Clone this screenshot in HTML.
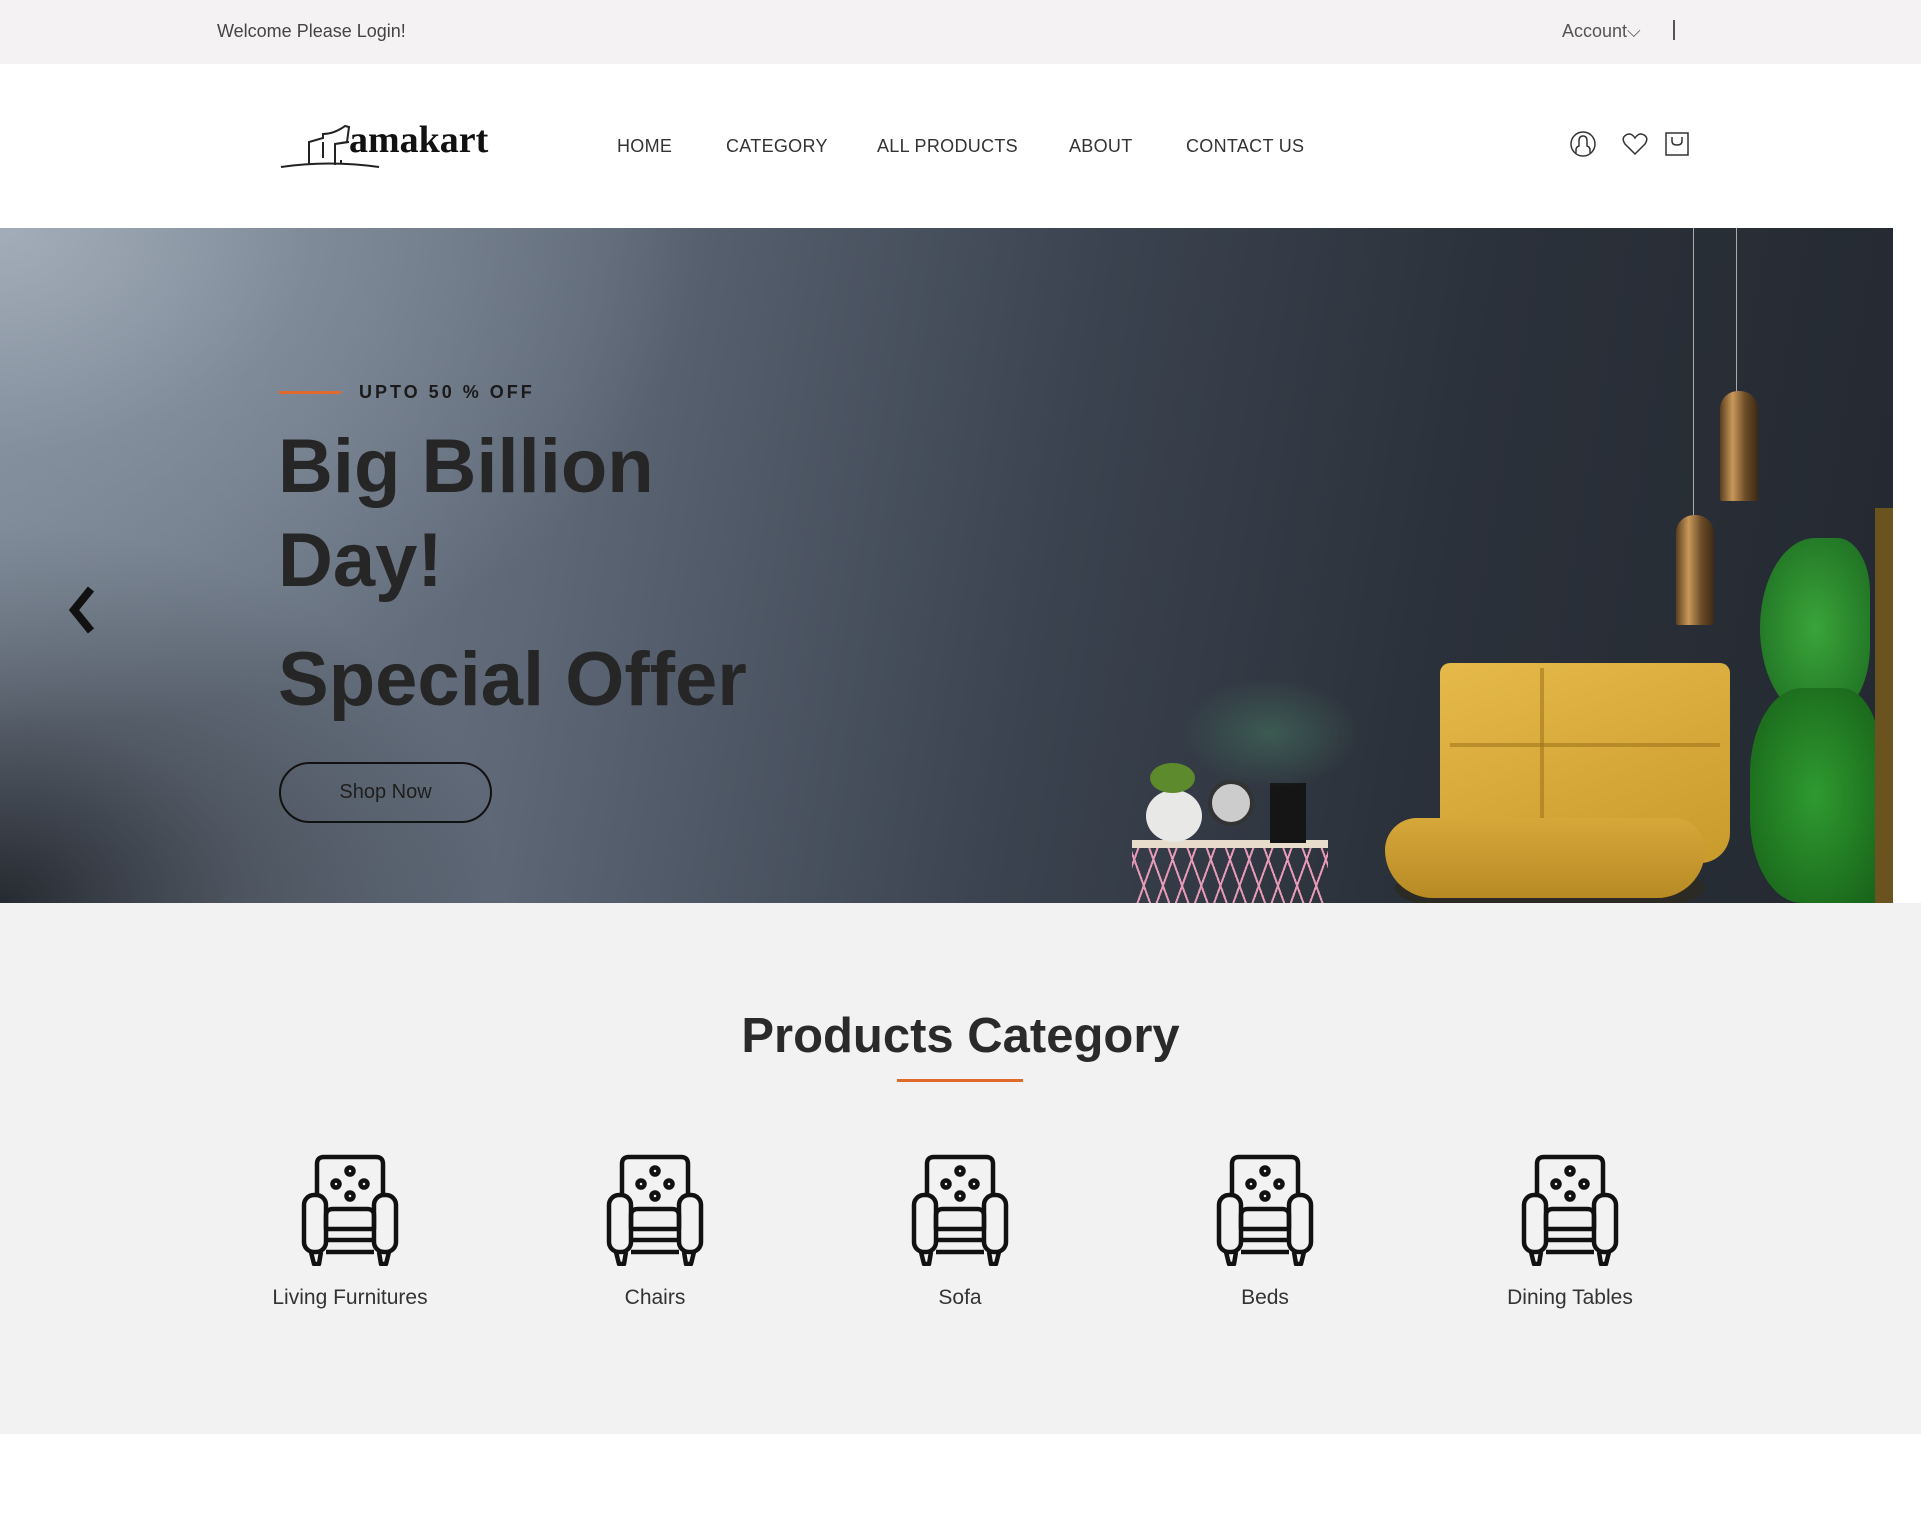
<!DOCTYPE html>
<html><head><meta charset="utf-8"><style>
*{margin:0;padding:0;box-sizing:border-box}
body{width:1921px;height:1537px;background:#fff;font-family:"Liberation Sans",sans-serif;position:relative;overflow:hidden;color:#222}
.abs{position:absolute}
.top{left:0;top:0;width:1921px;height:64px;background:#f4f2f2}
.nav a{position:absolute;top:136px;font-size:18px;color:#333;letter-spacing:.3px}
.hero{left:0;top:228px;width:1893px;height:675px;overflow:hidden;
background:
radial-gradient(ellipse 700px 500px at 0px 0px,#a3adb9 0%,rgba(140,152,166,.6) 45%,rgba(0,0,0,0) 100%),
radial-gradient(ellipse 500px 380px at 0px 675px,#262a31 0%,rgba(38,42,49,.4) 50%,rgba(0,0,0,0) 100%),
linear-gradient(100deg,#7a8593 0%,#5d6775 30%,#3b4350 55%,#2b313a 75%,#242931 100%);}
.gray{left:0;top:903px;width:1921px;height:531px;background:#f2f2f2}
.cat{position:absolute;top:1154px;width:200px;text-align:center;font-size:21px;color:#333}
.cat svg{display:block;margin:0 auto 20px}
</style></head><body>
<div class="abs top"></div>
<div class="abs" style="left:217px;top:21px;font-size:18px;color:#444">Welcome Please Login!</div>
<div class="abs" style="left:1562px;top:21px;font-size:18px;color:#555">Account⌵</div>
<div class="abs" style="left:1673px;top:20px;width:2px;height:20px;background:#555"></div>

<svg class="abs" style="left:279px;top:118px" width="210" height="54" viewBox="0 0 210 54">
<path d="M2 49 Q50 42 100 49" stroke="#222" stroke-width="2" fill="none"/>
<path d="M30 47 V24 L44 20 L44 16 Q55 16 66 8 L70 9 L68 24 L56 26 L56 47 M44 24 L44 40 M56 26 L70 24 M62 42 L62 46" stroke="#222" stroke-width="2" fill="none"/>
<text x="70" y="34" font-family="Liberation Serif,serif" font-weight="bold" font-size="38" fill="#111">amakart</text>
</svg>

<div class="nav">
<a style="left:617px">HOME</a><a style="left:726px">CATEGORY</a><a style="left:877px">ALL PRODUCTS</a><a style="left:1069px">ABOUT</a><a style="left:1186px">CONTACT US</a>
</div>
<svg class="abs" style="left:1570px;top:131px" width="26" height="26" viewBox="0 0 26 26" fill="none" stroke="#333" stroke-width="1.5"><circle cx="13" cy="13" r="12"/><path d="M6 22 V19 Q6 16 9 15 V10 Q9 5 13 5 Q17 5 17 10 V15 Q20 16 20 19 V22"/></svg>
<svg class="abs" style="left:1622px;top:132px" width="26" height="24" viewBox="0 0 26 24" fill="none" stroke="#333" stroke-width="1.5"><path d="M13 22 L3 12 Q-1 6 4 3 Q9 0 13 6 Q17 0 22 3 Q27 6 23 12 Z"/></svg>
<svg class="abs" style="left:1665px;top:132px" width="24" height="24" viewBox="0 0 24 24" fill="none" stroke="#333" stroke-width="1.5"><rect x="1" y="1" width="22" height="22"/><path d="M7 5 V9 Q7 13 12 13 Q17 13 17 9 V5"/></svg>

<div class="abs hero">
 <div class="abs" style="left:1693px;top:0;width:1px;height:290px;background:#aaa"></div>
 <div class="abs" style="left:1736px;top:0;width:1px;height:165px;background:#aaa"></div>
 <div class="abs" style="left:1720px;top:163px;width:38px;height:110px;border-radius:18px 18px 2px 2px;background:linear-gradient(90deg,#5a3f1f,#c9985a,#6b4c28,#3d2a14)"></div>
 <div class="abs" style="left:1676px;top:287px;width:38px;height:110px;border-radius:18px 18px 2px 2px;background:linear-gradient(90deg,#5a3f1f,#c9985a,#6b4c28,#3d2a14)"></div>
 <div class="abs" style="left:1395px;top:630px;width:310px;height:60px;border-radius:50%;background:#2b2a24"></div>
 <div class="abs" style="left:1440px;top:435px;width:290px;height:200px;border-radius:10px 10px 30px 30px;background:linear-gradient(160deg,#e5b94a,#c99a2c)"></div>
 <div class="abs" style="left:1540px;top:440px;width:4px;height:180px;background:rgba(150,110,20,.5)"></div>
 <div class="abs" style="left:1450px;top:515px;width:270px;height:4px;background:rgba(150,110,20,.5)"></div>
 <div class="abs" style="left:1385px;top:590px;width:320px;height:80px;border-radius:40px 40px 60px 60px;background:linear-gradient(180deg,#d6a83a,#b88a24)"></div>
 <div class="abs" style="left:1132px;top:612px;width:196px;height:63px;border-top:8px solid #e8dccc;background:repeating-linear-gradient(70deg,transparent 0 16px,#e79ab7 16px 18px),repeating-linear-gradient(-70deg,transparent 0 16px,#e79ab7 16px 18px)"></div>
 <div class="abs" style="left:1146px;top:562px;width:56px;height:52px;border-radius:50%;background:#e8e8e6"></div>
 <div class="abs" style="left:1150px;top:535px;width:45px;height:30px;border-radius:50%;background:#5d8a2c"></div>
 <div class="abs" style="left:1208px;top:552px;width:46px;height:46px;border-radius:50%;background:#ccc;border:4px solid #333"></div>
 <div class="abs" style="left:1270px;top:555px;width:36px;height:60px;background:#151515"></div>
 <div class="abs" style="left:1180px;top:450px;width:180px;height:110px;border-radius:50%;background:radial-gradient(#3c5a52,rgba(60,90,82,0) 70%)"></div>
 <div class="abs" style="left:1760px;top:310px;width:110px;height:180px;border-radius:50% 30% 40% 50%;background:radial-gradient(#3aa43a,#1c6a20)"></div>
 <div class="abs" style="left:1750px;top:460px;width:130px;height:215px;border-radius:40% 30% 0 40%;background:radial-gradient(#2f9a30,#176018)"></div>
 <div class="abs" style="left:1875px;top:280px;width:18px;height:395px;background:#6b5320"></div>
 <div class="abs" style="left:279px;top:163px;width:62px;height:3px;background:#e06a2c"></div>
 <div class="abs" style="left:359px;top:154px;font-size:18px;font-weight:bold;letter-spacing:3px;color:#1a1a1a">UPTO 50 % OFF</div>
 <div class="abs" style="left:278px;top:192px;font-size:76px;font-weight:bold;line-height:94px;color:#262626;letter-spacing:0px">Big Billion<br>Day!</div>
 <div class="abs" style="left:278px;top:408px;font-size:76px;font-weight:bold;color:#262626;letter-spacing:0px">Special Offer</div>
 <div class="abs" style="left:279px;top:534px;width:213px;height:61px;border:2px solid #111;border-radius:31px;text-align:center;line-height:57px;font-size:20px;color:#1e1e1e">Shop Now</div>
 <svg class="abs" style="left:64px;top:356px" width="34" height="52" viewBox="0 0 34 52"><path d="M27 5 L10 26 L27 47" stroke="#111" stroke-width="8" fill="none"/></svg>
</div>

<div class="abs gray"></div>
<div class="abs" style="left:0;width:1921px;top:1008px;text-align:center;font-size:49px;font-weight:bold;color:#2a2a2a">Products Category</div>
<div class="abs" style="left:897px;top:1079px;width:126px;height:3px;background:#e06a2c"></div>

<svg width="0" height="0" style="position:absolute"><defs><g id="ch" fill="none" stroke="#111" stroke-width="4.5" stroke-linejoin="round">
<path d="M16 40 V10 Q16 3 23 3 H75 Q82 3 82 10 V40"/>
<rect x="3" y="41" width="22" height="57" rx="10"/><rect x="73" y="41" width="22" height="57" rx="10"/>
<path d="M25 75 V62 Q25 55 32 55 H66 Q73 55 73 62 V75 M25 75 H73 M25 86 H73 M25 98 H73"/>
<path d="M10 98 L13 110 H18 L20 98 M78 98 L80 110 H85 L88 98"/>
<circle cx="49" cy="17" r="3.5"/><circle cx="35" cy="30" r="3.5"/><circle cx="63" cy="30" r="3.5"/><circle cx="49" cy="42" r="3.5"/>
</g></defs></svg>
<div class="cat" style="left:250px"><svg width="98" height="112"><use href="#ch"/></svg>Living Furnitures</div>
<div class="cat" style="left:555px"><svg width="98" height="112"><use href="#ch"/></svg>Chairs</div>
<div class="cat" style="left:860px"><svg width="98" height="112"><use href="#ch"/></svg>Sofa</div>
<div class="cat" style="left:1165px"><svg width="98" height="112"><use href="#ch"/></svg>Beds</div>
<div class="cat" style="left:1470px"><svg width="98" height="112"><use href="#ch"/></svg>Dining Tables</div>
</body></html>
